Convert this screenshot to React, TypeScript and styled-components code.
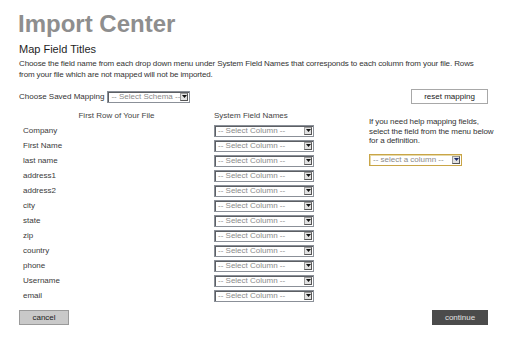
import React from "react";
import styled, { createGlobalStyle } from "styled-components";

const Global = createGlobalStyle`
  html, body { margin: 0; padding: 0; background: #fff; }
  body { font-family: "Liberation Sans", Arial, sans-serif; font-size: 8px; color: #333; }
`;

const Page = styled.div`
  width: 512px;
  height: 338px;
  box-sizing: border-box;
  padding: 10px 24px 0 19px;
  overflow: hidden;
`;

const Title = styled.h1`
  margin: 0 0 0 -1px;
  font-size: 24px;
  line-height: 28px;
  font-weight: bold;
  color: #8e8e8e;
`;

const Subtitle = styled.h2`
  margin: 5px 0 0 0;
  font-size: 11px;
  line-height: 13px;
  font-weight: normal;
  color: #1e1e1e;
`;

const Intro = styled.p`
  margin: 3px 0 0 0;
  font-size: 8px;
  line-height: 10.5px;
  letter-spacing: -0.12px;
  white-space: nowrap;
  color: #333;
`;

const MappingRow = styled.div`
  display: flex;
  align-items: center;
  justify-content: space-between;
  margin-top: 9px;
  height: 15px;
`;

const InlineLabel = styled.div`
  display: flex;
  align-items: center;
  gap: 3px;
  color: #333;
`;

const SelectBox = styled.div<{ $w: number; $accent?: boolean }>`
  display: flex;
  align-items: center;
  justify-content: space-between;
  width: ${(p) => p.$w}px;
  height: 12px;
  box-sizing: border-box;
  background: #fff;
  border: 1px solid ${(p) => (p.$accent ? "#c9a547" : "#8b9098")};
  box-shadow: ${(p) => (p.$accent ? "inset 1px 1px 0 #e6d9a8" : "inset 1px 1px 0 #5c5f64")};
  padding: 0 1px 0 3px;
  color: #8a8a8a;
  font-size: 8px;
  line-height: 10px;
  white-space: nowrap;
`;

const Arrow = styled.span`
  display: flex;
  align-items: center;
  justify-content: center;
  width: 8px;
  height: 8px;
  box-sizing: border-box;
  background: #e2e2e2;
  border: 1px solid #9a9a9a;
  border-right-color: #555;
  border-bottom-color: #555;
`;

const Select = ({ w, text, accent }: { w: number; text: string; accent?: boolean }) => (
  <SelectBox $w={w} $accent={accent}>
    <span>{text}</span>
    <Arrow>
      <svg width="5" height="3" viewBox="0 0 5 3">
        <path d="M0 0 L5 0 L2.5 3 Z" fill={accent ? "#1a2a6a" : "#111"} />
      </svg>
    </Arrow>
  </SelectBox>
);

const Button = styled.button<{ $variant: "light" | "gray" | "dark"; $w: number }>`
  width: ${(p) => p.$w}px;
  height: 15px;
  box-sizing: border-box;
  padding: 0;
  font-family: inherit;
  font-size: 8px;
  line-height: 13px;
  cursor: pointer;
  background: ${(p) => (p.$variant === "light" ? "#fff" : p.$variant === "gray" ? "#c9c9c9" : "#4b4b4b")};
  color: ${(p) => (p.$variant === "dark" ? "#e2e2e2" : "#222")};
  border: 1px solid ${(p) => (p.$variant === "light" ? "#a8a8a8" : p.$variant === "gray" ? "#9a9a9a" : "#4b4b4b")};
`;

const Main = styled.div`
  display: flex;
  margin-top: 4px;
`;

const Table = styled.div`
  display: grid;
  grid-template-columns: 195px 100px;
  grid-auto-rows: 15px;
  align-items: center;
  width: 350px;
  flex-shrink: 0;
`;

const HeadCell = styled.div<{ $center?: boolean }>`
  height: 14px;
  line-height: 14px;
  color: #444;
  text-align: ${(p) => (p.$center ? "center" : "left")};
`;

const FieldLabel = styled.div`
  padding-left: 4px;
  color: #3a3a3a;
`;

const Help = styled.div`
  display: flex;
  flex-direction: column;
  gap: 8px;
  padding-top: 9px;
`;

const HelpText = styled.div`
  font-size: 8px;
  line-height: 9.5px;
  white-space: nowrap;
  letter-spacing: -0.1px;
  color: #333;
`;

const Footer = styled.div`
  display: flex;
  justify-content: space-between;
  margin-top: 7px;
`;

const fields = [
  "Company",
  "First Name",
  "last name",
  "address1",
  "address2",
  "city",
  "state",
  "zip",
  "country",
  "phone",
  "Username",
  "email",
];

export default function App() {
  return (
    <>
      <Global />
      <Page>
        <Title>Import Center</Title>
        <Subtitle>Map Field Titles</Subtitle>
        <Intro>
          Choose the field name from each drop down menu under System Field Names that corresponds to each column from your file. Rows
          <br />
          from your file which are not mapped will not be imported.
        </Intro>
        <MappingRow>
          <InlineLabel>
            Choose Saved Mapping
            <Select w={83} text="-- Select Schema --" />
          </InlineLabel>
          <Button $variant="light" $w={77}>reset mapping</Button>
        </MappingRow>
        <Main>
          <Table>
            <HeadCell $center>First Row of Your File</HeadCell>
            <HeadCell>System Field Names</HeadCell>
            {fields.map((f) => (
              <React.Fragment key={f}>
                <FieldLabel>{f}</FieldLabel>
                <Select w={100} text="-- Select Column --" />
              </React.Fragment>
            ))}
          </Table>
          <Help>
            <HelpText>
              If you need help mapping fields,
              <br />
              select the field from the menu below
              <br />
              for a definition.
            </HelpText>
            <Select w={93} text="-- select a column --" accent />
          </Help>
        </Main>
        <Footer>
          <Button $variant="gray" $w={50}>cancel</Button>
          <Button $variant="dark" $w={56}>continue</Button>
        </Footer>
      </Page>
    </>
  );
}
